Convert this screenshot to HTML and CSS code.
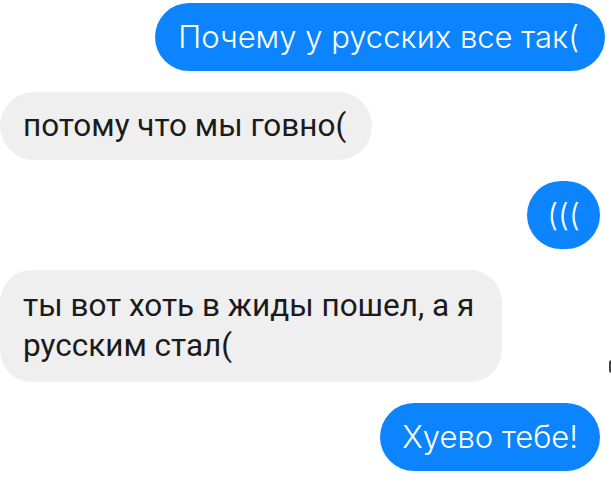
FILE: index.html
```html
<!DOCTYPE html>
<html lang="ru">
<head>
    <meta charset="UTF-8">
    <meta name="viewport" content="width=device-width, initial-scale=1.0">
    <title>Чат</title>
    <link rel="stylesheet" href="styles.css">
</head>
<body>
    <div class="chat">
        <div class="row out">
            <div class="bubble bubble-first">Почему у русских все так(</div>
        </div>
        <div class="row in">
            <div class="bubble">потому что мы говно(</div>
        </div>
        <div class="row out">
            <div class="bubble bubble-round">(((</div>
        </div>
        <div class="row in">
            <div class="bubble bubble-long">ты вот хоть в жиды пошел, а я русским стал(</div>
            <span class="seen"></span>
        </div>
        <div class="row out">
            <div class="bubble">Хуево тебе!</div>
        </div>
    </div>
</body>
</html>
```

FILE: styles.css
```css
body {
    margin: 0;
    background-color: #fff;
    font-family: Roboto, "Liberation Sans", sans-serif;
}
.chat {
    display: flex;
    flex-direction: column;
    gap: 21px;
    padding: 3px 0 0;
}
.row {
    position: relative;
    display: flex;
}
.row.out {
    justify-content: flex-end;
    padding-right: 11px;
}
.row.in {
    justify-content: flex-start;
}
.bubble {
    box-sizing: border-box;
    min-height: 68px;
    padding: 0 22px;
    border-radius: 34px;
    font-size: 31px;
    line-height: 68px;
}
.out .bubble {
    background-color: #0b84fe;
    color: #fff;
    font-family: Inter, "Liberation Sans", sans-serif;
    font-weight: 300;
}
.in .bubble {
    background-color: #efefef;
    color: #1b1b1b;
    padding: 0 26px 0 23px;
    font-size: 31.5px;
}
.out .bubble-first {
    margin-right: -5px;
    padding: 0 26px 0 23px;
}
.out .bubble-round {
    width: 73px;
    padding: 0;
    text-align: center;
}
.in .bubble-long {
    max-width: 502px;
    padding: 16px 24px 16px 23px;
    line-height: 40px;
    border-radius: 32px;
}
.seen {
    position: absolute;
    right: -3px;
    top: 90px;
    width: 5px;
    height: 13px;
    border-radius: 3px;
    background-color: #444;
}
```
